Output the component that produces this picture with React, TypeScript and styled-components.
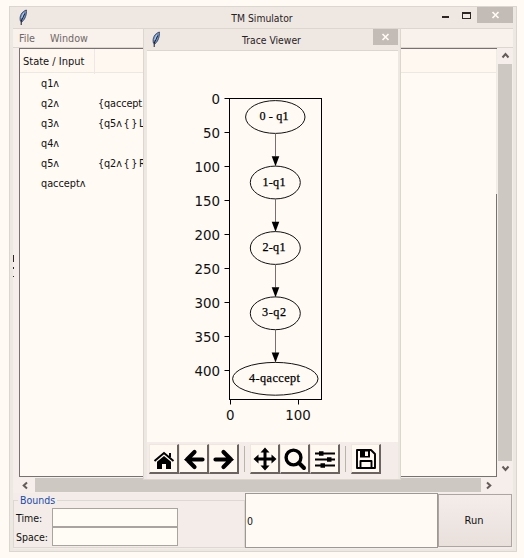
import React from "react";
import styled, { createGlobalStyle, css } from "styled-components";

const GlobalStyle = createGlobalStyle`
  *, *::before, *::after { box-sizing: border-box; }
  body { margin: 0; background: #fffaf3; }
`;

const Desktop = styled.main`
  width: 524px;
  height: 558px;
  padding: 6px 0 0 9px;
  overflow: hidden;
  background: #fffaf3;
  color: #111;
  font: 10.5px/14px "DejaVu Sans Condensed", "DejaVu Sans", sans-serif;
  font-stretch: condensed;
  white-space: nowrap;
`;

const MainWindow = styled.section`
  position: relative;
  width: 508px;
  height: 546px;
  padding: 0 3px;
  display: flex;
  flex-direction: column;
  background: #eee8e3;
  border: 1px solid #dcd6d0;
`;

const TitleBar = styled.header<{ $inner?: boolean }>`
  flex: none;
  height: ${(p) => (p.$inner ? 22 : 21)}px;
  display: grid;
  grid-template-columns: 80px 1fr 82px;
  align-items: start;
  background: #eee7e2;
  border-bottom: ${(p) => (p.$inner ? "1px solid #dcd6cf" : "0")};
`;

const Title = styled.h1`
  margin: 4px 0 0;
  font-size: 10.3px;
  font-weight: 400;
  line-height: 14px;
  text-align: center;
  color: #29211f;
`;

const TitleIcon = styled.span<{ $left: number }>`
  display: flex;
  padding: 2px 0 0 ${(p) => p.$left}px;
`;

const Controls = styled.div`
  display: flex;
  justify-content: flex-end;
  align-items: flex-start;
`;

const WindowGlyph = styled.span<{ $kind: "min" | "max" }>`
  flex: none;
  ${(p) =>
    p.$kind === "min"
      ? css`
          width: 7px;
          height: 2px;
          margin: 9px 13px 0 0;
          background: #2d2523;
        `
      : css`
          width: 9px;
          height: 7px;
          margin: 5px 6px 0 0;
          border: 1px solid #2d2523;
          border-top-width: 2px;
        `}
`;

const CloseButton = styled.button<{ $width: number }>`
  flex: none;
  width: ${(p) => p.$width}px;
  height: 16px;
  padding: 0;
  border: 0;
  display: grid;
  place-items: center;
  background: #c3bbb5;
`;

const MenuBar = styled.nav`
  flex: none;
  height: 20px;
  padding: 3px 0 0 6px;
  display: flex;
  gap: 15px;
  font-size: 10.7px;
  color: #6f6865;
  background: #f9f1ec;
  border: 1px solid #ddd6d0;
  border-width: 1px 0;
`;

const Workspace = styled.div`
  flex: none;
  height: 445px;
  padding-left: 6px;
  display: grid;
  grid-template: 430px 15px / 479px 15px;
  background: #f5eeea;
`;

const TreePane = styled.div`
  width: 478px;
  height: 429px;
  background:
    linear-gradient(#f1ebe6 0 145px, #77716f 145px) right / 1px 100% no-repeat,
    #fffaf4;
  border: 1px solid #77716f;
  border-right: 0;
`;

const TreeHeader = styled.div`
  height: 24px;
  margin: 0 1px 1px 0;
  display: grid;
  grid-template-columns: 75px 1fr;
  align-items: stretch;
  background: #fff8f1;
  border-bottom: 1px solid #eee8e2;
  font-size: 11px;
  line-height: 25px;
`;

const HeaderCell = styled.span`
  padding-left: 3px;
  border-right: 1px solid #eee8e2;
`;

const TreeRow = styled.div`
  height: 20px;
  display: grid;
  grid-template-columns: 57px 1fr;
  padding-left: 21px;
  font-size: 10.8px;
  line-height: 20px;
  word-spacing: -1.3px;
`;

const ActionCell = styled.span`
  letter-spacing: -0.12px;
`;

const Scrollbar = styled.div<{ $horizontal?: boolean }>`
  display: flex;
  flex-direction: ${(p) => (p.$horizontal ? "row" : "column")};
  ${(p) => (p.$horizontal ? "margin-left: -1px;" : "margin-left: 0;")}
`;

const ScrollArrow = styled.span`
  flex: none;
  width: 15px;
  height: 15px;
  display: grid;
  place-items: center;
`;

const Thumb = styled.span<{ $horizontal?: boolean }>`
  background: #cec8c3;
  ${(p) =>
    p.$horizontal
      ? "width: 446px; height: 14px; margin: 0 0 0 2px;"
      : "width: 14px; height: 397px; margin: 1px 0 0;"}
`;

const Footer = styled.footer`
  flex: none;
  height: 56px;
  display: grid;
  grid-template-columns: 232px 193px 74px;
  background: #f3ece8;
`;

const Bounds = styled.fieldset`
  height: 55px;
  min-width: 0;
  margin: 0;
  padding: 0 0 0 2px;
  border: 1px solid #ded8d3;
`;

const Legend = styled.legend`
  margin-left: 2px;
  padding: 0 2px;
  height: 15px;
  line-height: 15px;
  color: #2149ac;
`;

const Field = styled.label`
  height: 19px;
  display: grid;
  grid-template-columns: 36px 126px;
  align-items: center;
`;

const Entry = styled.input`
  width: 126px;
  height: 19px;
  padding: 0 3px;
  border: 1px solid #aaa4a0;
  border-radius: 0;
  outline: 0;
  background: #fffbf5;
`;

const Output = styled.output`
  display: flex;
  align-items: center;
  height: 55px;
  padding-left: 1px;
  background: #fffaf3;
  border: 1px solid #9e9894;
`;

const RunButton = styled.button`
  height: 53px;
  margin: 1px 0 0;
  padding: 1px 2px 0 0;
  font: inherit;
  font-size: 11px;
  color: #111;
  border: 1px solid #aca5a1;
  border-radius: 0;
  background: linear-gradient(#f4ede9, #e9e0dc);
`;

const SashGrip = styled.span`
  position: absolute;
  left: 3px;
  top: 248px;
  width: 1px;
  height: 22px;
  background: linear-gradient(#332525 0 7px, transparent 7px 12px, #332525 12px 14px, transparent 14px 21px, #332525 21px);
`;

const TraceWindow = styled.section`
  position: absolute;
  left: 133px;
  top: 21px;
  width: 258px;
  height: 452px;
  padding: 0 2px 0 3px;
  display: flex;
  flex-direction: column;
  background: #eee8e3;
  border: 1px solid #dcd6cf;
`;

const Chart = styled.svg`
  display: block;
  flex: none;
  width: 251px;
  height: 391px;
  background: #fffaf4;
  font-stretch: normal;
`;

const Toolbar = styled.div`
  flex: 1;
  padding: 2px 0 0 2px;
  display: flex;
  align-items: flex-start;
  background: #f3ece8;
`;

const ToolButton = styled.button`
  width: 30px;
  height: 30px;
  padding: 0;
  display: grid;
  place-items: center;
  background: #fff9f1;
  border: 1px solid #eee6df;
  border-right: 2px solid #6b6360;
  border-bottom: 2px solid #6b6360;
`;

const Separator = styled.span`
  width: 1px;
  height: 26px;
  margin: 2px 5px;
  background: #bbb2ac;
`;

function Feather() {
  return (
    <svg width="12" height="17" viewBox="0 0 12 17">
      <path d="M2.4 12C1.2 7 3.7 2.5 8.4 1 8.7 5 7.5 10.2 3.7 13Z" fill="#6f92c6" stroke="#39415a" strokeWidth="0.9" />
      <path d="M3.2 16V12L6.8 4.5" fill="none" stroke="#151a29" strokeWidth="1" />
      <path d="M3.6 9 5.6 4" stroke="#b7d0ee" />
    </svg>
  );
}

function Cross() {
  return (
    <svg width="9" height="8" viewBox="0 0 9 8">
      <path d="m1.5 1 6 6m0-6-6 6" stroke="#fffaf5" strokeWidth="1.7" />
    </svg>
  );
}

const chevrons = {
  up: "M1.5 6.5 4.5 3l3 3.5",
  down: "M1.5 2.5 4.5 6l3-3.5",
  left: "M6 1.5 2.7 4.5 6 7.5",
  right: "M3 1.5 6.3 4.5 3 7.5",
};

function Arrow({ direction }: { direction: keyof typeof chevrons }) {
  return (
    <ScrollArrow>
      <svg width="9" height="9" viewBox="0 0 9 9">
        <path d={chevrons[direction]} fill="none" stroke="#655c58" strokeWidth="2" />
      </svg>
    </ScrollArrow>
  );
}

const rows = [
  ["q1ʌ", ""],
  ["q2ʌ", "{qaccept."],
  ["q3ʌ", "{q5ʌ { } L"],
  ["q4ʌ", ""],
  ["q5ʌ", "{q2ʌ { } R"],
  ["qacceptʌ", ""],
];

const nodes = [
  { label: "0 - q1", y: 117, rx: 29.7, w: 29 },
  { label: "1-q1", y: 182.5, rx: 25, w: 23 },
  { label: "2-q1", y: 248, rx: 25, w: 23 },
  { label: "3-q2", y: 313.3, rx: 25, w: 24 },
  { label: "4-qaccept", y: 378.8, rx: 42.7, w: 51 },
];

function TraceGraph() {
  return (
    <Chart viewBox="147 51 251 391">
      <rect x="229.5" y="98.5" width="92" height="301" fill="none" stroke="#000" />
      <g fontFamily="DejaVu Sans" fontSize="13.4" fill="#111">
        {Array.from({ length: 9 }, (_, i) => (
          <g key={i}>
            <path d={`M224.5 ${98.5 + i * 34}H229.5`} stroke="#000" />
            <text x="220" y={103.8 + i * 34} textAnchor="end">{i * 50}</text>
          </g>
        ))}
        <path d="M230.5 399.5v5M298.5 399.5v5" stroke="#000" />
        <text x="230.3" y="420" textAnchor="middle">0</text>
        <text x="298" y="420" textAnchor="middle">100</text>
      </g>
      {nodes.map((n, i) => (
        <g key={n.label}>
          <ellipse cx="275.3" cy={n.y} rx={n.rx} ry="16.4" fill="none" stroke="#111" />
          <text
            x={i === 4 ? 274.5 : 274}
            y={n.y + 3}
            textAnchor="middle"
            textLength={n.w}
            fontFamily="Liberation Serif"
            fontSize="12.2"
            fill="#000"
            stroke="#000"
            strokeWidth="0.25"
          >
            {n.label}
          </text>
          {i < 4 && (
            <>
              <path d={`M275.5 ${n.y + 16.5}v23`} stroke="#77706c" />
              <path d={`M271.7 ${n.y + 39.2}h7.6l-3.8 10Z`} fill="#000" />
            </>
          )}
        </g>
      ))}
    </Chart>
  );
}

function ToolIcon({ name }: { name: string }) {
  return (
    <svg width="24" height="24" viewBox="0 0 24 24" fill="none" stroke="#000">
      {name === "home" && (
        <>
          <path d="m2.5 14 9.5-8 9.5 8M18 10V6" strokeWidth="2" />
          <path d="m5 14.8 7-5.8 7 5.8V22h-5v-5h-4v5H5Z" fill="#000" stroke="none" />
        </>
      )}
      {name === "back" && <path d="M20.5 12.5H5m7.5-7.5L5 12.5l7.5 7.5" strokeWidth="4.2" strokeLinecap="round" />}
      {name === "forward" && <path d="M3.5 12.5H19m-7.5-7.5 7.5 7.5-7.5 7.5" strokeWidth="4.2" strokeLinecap="round" />}
      {name === "pan" && (
        <>
          <path d="M12 4v16M4 12h16" strokeWidth="3" />
          <path d="M12 .5 16.5 5.5h-9ZM12 23.5 7.5 18.5h9ZM.5 12 5.5 7.5v9ZM23.5 12 18.5 16.5v-9Z" fill="#000" stroke="none" />
        </>
      )}
      {name === "zoom" && (
        <>
          <circle cx="10.5" cy="10.5" r="7.4" strokeWidth="3.4" />
          <path d="m16 16 5 5" strokeWidth="4" strokeLinecap="round" />
        </>
      )}
      {name === "configure" && (
        <>
          <path d="M2 6.5h20M2 12.5h20M2 18.5h20" strokeWidth="2" />
          <path d="M6 4.2h4.5v4.5H6ZM14 10.2h4.5v4.5H14ZM7.5 16.2H12v4.5H7.5Z" fill="#000" stroke="none" />
        </>
      )}
      {name === "save" && (
        <>
          <path d="M3 3h14l4 4v14H3ZM6.5 21v-7h11v7" strokeWidth="1.9" strokeLinejoin="round" />
          <path d="M6 3h10v7.5H6Z" fill="#000" stroke="none" />
          <path d="M11 4.5h3V9h-3Z" fill="#fff9f1" stroke="none" />
        </>
      )}
    </svg>
  );
}

function Tool({ name }: { name: string }) {
  return (
    <ToolButton aria-label={name}>
      <ToolIcon name={name} />
    </ToolButton>
  );
}

export default function App() {
  return (
    <>
      <GlobalStyle />
      <Desktop>
        <MainWindow>
          <TitleBar>
            <TitleIcon $left={5}><Feather /></TitleIcon>
            <Title>TM Simulator</Title>
            <Controls>
              <WindowGlyph $kind="min" />
              <WindowGlyph $kind="max" />
              <CloseButton $width={36} aria-label="Close"><Cross /></CloseButton>
            </Controls>
          </TitleBar>
          <MenuBar><span>File</span><span>Window</span></MenuBar>
          <Workspace>
            <TreePane>
              <TreeHeader><HeaderCell>State / Input</HeaderCell><span /></TreeHeader>
              {rows.map(([state, action]) => (
                <TreeRow key={state}><span>{state}</span><ActionCell>{action}</ActionCell></TreeRow>
              ))}
            </TreePane>
            <Scrollbar><Arrow direction="up" /><Thumb /><Arrow direction="down" /></Scrollbar>
            <Scrollbar $horizontal>
              <Arrow direction="left" /><Thumb $horizontal /><Arrow direction="right" />
            </Scrollbar>
          </Workspace>
          <Footer>
            <Bounds>
              <Legend>Bounds</Legend>
              <Field>Time:<Entry /></Field>
              <Field>Space:<Entry /></Field>
            </Bounds>
            <Output>0</Output>
            <RunButton>Run</RunButton>
          </Footer>
          <SashGrip />
          <TraceWindow>
            <TitleBar $inner>
              <TitleIcon $left={4}><Feather /></TitleIcon>
              <Title>Trace Viewer</Title>
              <Controls><CloseButton $width={25} aria-label="Close trace"><Cross /></CloseButton></Controls>
            </TitleBar>
            <TraceGraph />
            <Toolbar>
              <Tool name="home" /><Tool name="back" /><Tool name="forward" />
              <Separator />
              <Tool name="pan" /><Tool name="zoom" /><Tool name="configure" />
              <Separator />
              <Tool name="save" />
            </Toolbar>
          </TraceWindow>
        </MainWindow>
      </Desktop>
    </>
  );
}
